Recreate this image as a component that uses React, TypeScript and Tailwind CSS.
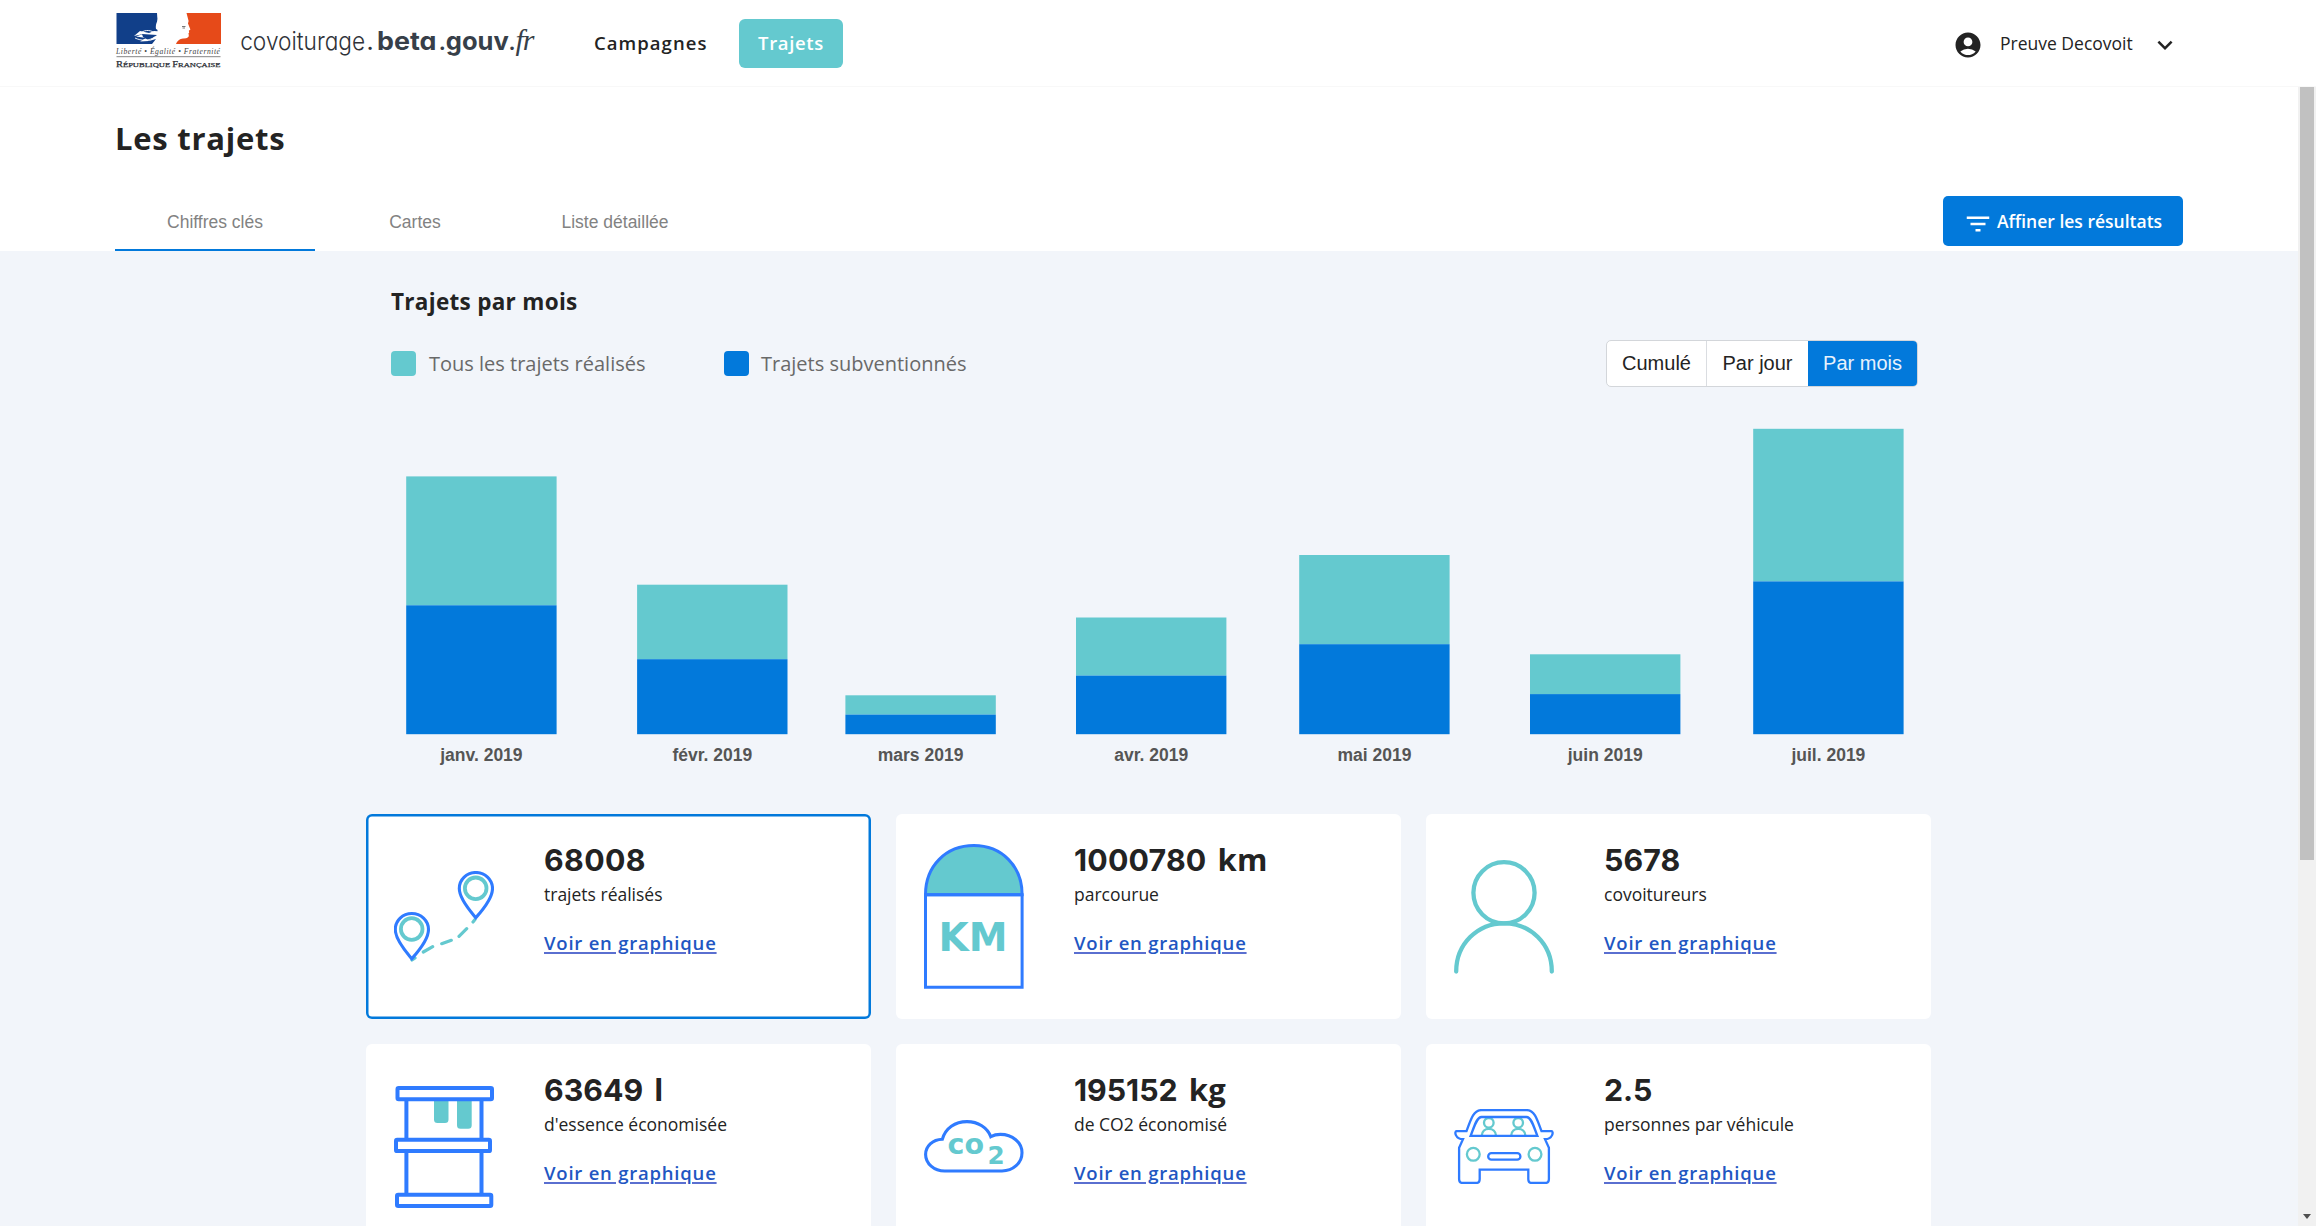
import type { ReactNode } from "react";
import { MdAccountCircle, MdFilterList, MdKeyboardArrowDown } from "react-icons/md";

const TEAL = "#64c9cf";
const LINE = "#2f7bff";

function Logo() {
  return (
    <svg width="430" height="60" viewBox="0 0 430 60" className="block shrink-0">
      <rect x="1.5" y="3" width="41" height="31" fill="#113f89" />
      <path
        d="M42 3H71.5C72.5 6 72.7 8 73.4 11L72.8 13.5L75.2 19.5L73.5 20.5L74 22.5L73 23.4L73.6 25.2C73.6 27.5 71 28.4 67 28C64 29.5 62 32 61 34H37L41 29L34 31L25 31.5L31 28L21 26.5L28 24L19 26L25 21L34 23L39 21L46 21.5L41 19C40 13 44 10 42.5 7Z"
        fill="#fff"
      />
      <path d="M71.5 3H106V34H61C62 31 65 28.6 68 28.4C72 28.6 74.2 27.4 73.8 25L73.4 23.4L74.2 22.4L73.8 20.7L75.4 19.6L73 13.6L73.6 11Z" fill="#e64a19" />
      <path d="M27 24L42 25L34 30.5L28 27Z" fill="#113f89" />
      <path d="M24 24c5-4 10-5 16-1M20 28c6 3 14 3 20-1" fill="none" stroke="#fff" strokeWidth="0.9" />
      <path d="M67 16.5h3.5M67.5 18h2.5" stroke="#555" strokeWidth="0.8" />
      <text x="1" y="43.5" fontSize="7.6" fontStyle="italic" fill="#444" textLength="104" fontFamily="'Liberation Serif', serif">
        Liberté • Égalité • Fraternité
      </text>
      <path d="M1.5 46.7H105.5" stroke="#777" strokeWidth="0.9" />
      <text x="1" y="56.6" fill="#2c2f36" stroke="#2c2f36" strokeWidth="0.25" fontSize="7" textLength="104.5" lengthAdjust="spacingAndGlyphs" fontFamily="'Liberation Serif', serif">
        <tspan fontSize="8.6">R</tspan>ÉPUBLIQUE <tspan fontSize="8.6">F</tspan>RANÇAISE
      </text>
      <g fontFamily="Inter, sans-serif">
        <text x="125.2" y="39.6" fontSize="25.5" fontWeight="300" fill="#2f3238" textLength="125" lengthAdjust="spacingAndGlyphs" style={{ fontFeatureSettings: "'cv11'" }}>
          covoiturage
        </text>
        <text x="251.5" y="39.6" fontSize="25" fontWeight="400" fill="#2f3238">.</text>
        <text x="262" y="39.6" fontSize="25" fontWeight="700" fill="#373f49" textLength="59.5" lengthAdjust="spacingAndGlyphs" style={{ fontFeatureSettings: "'cv11'" }}>
          beta
        </text>
        <text x="323.5" y="39.6" fontSize="25" fontWeight="500" fill="#373f49">.</text>
        <text x="330.8" y="39.6" fontSize="25" fontWeight="700" fill="#373f49" textLength="63" lengthAdjust="spacingAndGlyphs">
          gouv
        </text>
      </g>
      <text x="394" y="40" fontSize="30" fontStyle="italic" fill="#373f49" textLength="25.5" fontFamily="'Liberation Serif', serif">
        .fr
      </text>
    </svg>
  );
}

function RouteIcon() {
  const pin = "M81.8 46.7C78 42 65.3 28.5 65.3 17.5C65.3 8.5 72.8 1.5 81.8 1.5S98.5 8.5 98.5 17.5C98.5 28.5 86 42 81.8 46.7Z";
  return (
    <svg width="100" height="91" viewBox="0 0 100 91" fill="none">
      <g stroke={TEAL} strokeWidth="3.2" strokeLinecap="round">
        <path d="M81 48.5L79 51M72.7 57.7L65 65.3M57.3 69.3L47.7 72.7M38.7 75.7L29.3 81M21 87L18 89" />
      </g>
      <path d={pin} stroke={LINE} strokeWidth="3.1" />
      <circle cx="81.7" cy="17.3" r="10.8" stroke={TEAL} strokeWidth="3.8" />
      <g transform="translate(-64 41)">
        <path d={pin} stroke={LINE} strokeWidth="3.1" />
        <circle cx="81.7" cy="17" r="10.8" stroke={TEAL} strokeWidth="3.8" />
      </g>
    </svg>
  );
}

function MilestoneIcon() {
  return (
    <svg width="100" height="145" viewBox="0 0 100 145">
      <path d="M1.5 50.7C1.5 22 22 1.6 49.8 1.6S98.1 22 98.1 50.7Z" fill={TEAL} stroke={LINE} strokeWidth="3" />
      <path d="M1.5 50.7H98.1V143.2H1.5Z" fill="none" stroke={LINE} strokeWidth="3" />
      <text x="14.6" y="107" fontSize="39" fontWeight="700" fill={TEAL} textLength="69" fontFamily="'DejaVu Sans', sans-serif">
        KM
      </text>
    </svg>
  );
}

function PersonIcon() {
  return (
    <svg width="100" height="114" viewBox="0 0 100 114" fill="none" stroke={TEAL} strokeWidth="4.3" strokeLinecap="round">
      <circle cx="50" cy="32.8" r="30.6" />
      <path d="M2.2 111.5C2.2 84 23.5 63.3 50 63.3S97.8 84 97.8 111.5" />
    </svg>
  );
}

function BarrelIcon() {
  return (
    <svg width="100" height="122" viewBox="0 0 100 122" fill="none">
      <path d="M40 14H54.5V33.5Q54.5 37 51 37H43.5Q40 37 40 33.5ZM63 14H77.7V39.2Q77.7 42.7 74.2 42.7H66.5Q63 42.7 63 39.2Z" fill={TEAL} />
      <g stroke={LINE} strokeWidth="4">
        <path d="M12.4 13V54M87.5 13V54M12.4 65V109M87.5 65V109" />
        <rect x="3.5" y="2" width="94.5" height="11.3" rx="1.2" />
        <rect x="2" y="53.8" width="94" height="11.3" rx="1.2" />
        <rect x="3" y="108.8" width="94.3" height="11.2" rx="1.2" />
      </g>
    </svg>
  );
}

function CloudIcon() {
  return (
    <svg width="100" height="53" viewBox="0 0 100 53">
      <path
        d="M20.7 51C10 51 1.6 43.5 1.6 34.5C1.6 26.5 8.5 19.5 18.3 19.3C21.5 8 31 1.6 43 1.6C54 1.6 63.5 7.5 66.8 16.7C70 15 74 14.4 76.4 14.4C88.5 14.4 98 22.5 98 32.7C98 43 89 51 78 51Z"
        fill="none"
        stroke={LINE}
        strokeWidth="3.1"
      />
      <g fontFamily="'DejaVu Sans', sans-serif" fontWeight="700" fill={TEAL}>
        <text x="23.6" y="34.4" fontSize="28.5">co</text>
        <text x="63.6" y="43.7" fontSize="24.7">2</text>
      </g>
    </svg>
  );
}

function CarIcon() {
  return (
    <svg width="100" height="75" viewBox="0 0 100 75" fill="none" strokeWidth="2.3">
      <g stroke={TEAL}>
        <circle cx="34.8" cy="13.8" r="4.8" />
        <circle cx="64.2" cy="13.8" r="4.8" />
        <path d="M27.8 26.5C28 22.3 31 19.8 34.8 19.8S41.8 22.3 42 26.5M57.2 26.5C57.4 22.3 60.4 19.8 64.2 19.8S71.2 22.3 71.4 26.5" />
        <circle cx="19.3" cy="45.3" r="6.4" />
        <circle cx="81" cy="45.3" r="6.4" />
      </g>
      <g stroke={LINE}>
        <path d="M27.5 1.1H72.7C80 1.1 82.5 8 87.5 22.2H97.5C99.8 22.2 99 30 91 30.2L94.9 38.7V70C94.9 72.5 93.5 74 91 74H78C75.5 74 74.3 72.5 74.3 70V60.7H25.7V70C25.7 72.5 24.5 74 22 74H9C6.5 74 5.1 72.5 5.1 70V38.7L9 30.2C1 30 0.2 22.2 2.5 22.2H12.5C17.5 8 20 1.1 27.5 1.1Z" />
        <path d="M16.6 26.9C20 18.5 22.5 8 27.5 8H72.5C77.5 8 80 18.5 83.4 26.9Z" />
        <rect x="34.2" y="44.2" width="32.2" height="6.5" rx="3.2" />
      </g>
    </svg>
  );
}

const months = [
  { label: "janv. 2019", x: 406.2, top: 476.4, mid: 605.3 },
  { label: "févr. 2019", x: 637.1, top: 584.7, mid: 659.2 },
  { label: "mars 2019", x: 845.4, top: 695.3, mid: 714.6 },
  { label: "avr. 2019", x: 1076, top: 617.5, mid: 675.6 },
  { label: "mai 2019", x: 1299.2, top: 555, mid: 644.2 },
  { label: "juin 2019", x: 1530, top: 654.3, mid: 694.1 },
  { label: "juil. 2019", x: 1753.2, top: 428.8, mid: 581.4 },
];

function MonthlyChart() {
  const base = 734.2;
  return (
    <svg width="1565" height="385" viewBox="366 407 1565 385" className="block">
      {months.map((m) => (
        <g key={m.label}>
          <rect x={m.x} y={m.top} width="150.4" height={m.mid - m.top} fill={TEAL} />
          <rect x={m.x} y={m.mid} width="150.4" height={base - m.mid} fill="#0279db" />
          <text x={m.x + 75.2} y="761.4" textAnchor="middle" fontSize="17.5" fontWeight="700" fill="#555" fontFamily="'Liberation Sans', sans-serif">
            {m.label}
          </text>
        </g>
      ))}
    </svg>
  );
}

type CardProps = { value: string; unit?: string; label: string; icon: ReactNode; active?: boolean; tracking: string };

function StatCard({ value, unit, label, icon, active, tracking }: CardProps) {
  return (
    <article
      className={
        active
          ? "flex h-[205px] rounded-md bg-white shadow-[inset_0_0_0_2.5px_#0279db]"
          : "flex h-[205px] rounded-md bg-white"
      }
    >
      <div className="ml-7 flex w-[150px] shrink-0 items-center">{icon}</div>
      <div className="pt-[26px]">
        <p className="h-10 text-[30.3px] leading-10 font-bold whitespace-nowrap text-[#232323]">
          <span className={tracking}>{value}</span>
          {unit && <span className="ml-[11px] font-['Open_Sans',sans-serif] text-[31px] leading-none tracking-[0.3px]">{unit}</span>}
        </p>
        <p className="mt-0.5 h-6 font-['Open_Sans',sans-serif] text-[17.5px] leading-6 whitespace-nowrap text-[#232323]">{label}</p>
        <a
          href="#"
          className="mt-[25px] block h-6 font-['Open_Sans',sans-serif] text-[18.5px] leading-6 font-semibold tracking-[0.78px] whitespace-nowrap text-[#2156c2] underline decoration-[#5a6fd0] decoration-[1.5px] underline-offset-[2px]"
        >
          Voir en graphique
        </a>
      </div>
    </article>
  );
}

function Scrollbar() {
  return (
    <div className="flex w-[18px] shrink-0 flex-col items-center justify-between bg-[#f1f1f1]">
      <div className="h-[773px] w-[14px] bg-[#c1c1c1]" />
      <svg width="8" height="5" viewBox="0 0 8 5" className="mb-[7px]">
        <path d="M0 0H8L4 5Z" fill="#505050" />
      </svg>
    </div>
  );
}

export default function App() {
  return (
    <div className="flex h-[1226px] w-full flex-col overflow-hidden bg-white font-['Inter',sans-serif] text-[#232323]">
      <header className="flex h-[87px] shrink-0 items-start border-b border-[#f8f8f8] pr-[136px] pl-[115px]">
        <div className="mt-2.5 w-[479px]">
          <Logo />
        </div>
        <nav className="mt-[18.5px] flex items-center font-['Open_Sans',sans-serif] text-[18.5px] leading-[26px] font-semibold">
          <a href="#" className="w-[145px] pb-px tracking-[1.05px]">Campagnes</a>
          <a href="#" className="flex h-[49px] w-[104px] items-center justify-center rounded-md bg-[#64c9cf] pb-px tracking-[0.65px] text-white">
            Trajets
          </a>
        </nav>
        <div className="mt-[30px] ml-auto flex items-center">
          <MdAccountCircle className="size-[30px] text-[#232323]" />
          <span className="ml-[17px] h-[30px] w-[150px] font-['Open_Sans',sans-serif] text-[17.5px] leading-[26px]">Preuve Decovoit</span>
          <MdKeyboardArrowDown className="size-[30px]" />
        </div>
      </header>

      <div className="flex min-h-0 flex-1">
        <main className="flex w-[2298px] shrink-0 flex-col bg-[#f2f5fa]">
          <section className="flex h-[164px] shrink-0 flex-col bg-white pr-[115px] pl-[115px]">
            <h1 className="mt-[31px] h-10 font-['Open_Sans',sans-serif] text-[31px] leading-10 font-bold tracking-[0.75px]">Les trajets</h1>
            <div className="mt-auto flex items-end justify-between">
              <div className="flex font-['Liberation_Sans',sans-serif] text-[17.5px] text-[#828282]">
                <div className="flex h-[60px] w-[200px] items-center justify-center border-b-[2.5px] border-[#0279db] pt-[5px]">Chiffres clés</div>
                <div className="flex h-[60px] w-[200px] items-center justify-center border-b-[2.5px] border-transparent pt-[5px]">Cartes</div>
                <div className="flex h-[60px] w-[200px] items-center justify-center border-b-[2.5px] border-transparent pt-[5px]">Liste détaillée</div>
              </div>
              <button className="mb-[5px] flex h-[50px] w-[240px] items-center rounded-[5px] bg-[#0279db] pl-5 font-['Open_Sans',sans-serif] text-[17.5px] font-semibold whitespace-nowrap text-white">
                <MdFilterList className="mt-[5px] mr-[4px] size-[30px]" />
                Affiner les résultats
              </button>
            </div>
          </section>

          <section className="ml-[366px] w-[1565px]">
            <div className="h-[156px] pt-[36px] pr-[13px] pl-[25px]">
              <h2 className="h-[30px] font-['Open_Sans',sans-serif] text-[22.5px] leading-[30px] font-bold tracking-[0.3px]">Trajets par mois</h2>
              <div className="mt-[23px] flex items-center justify-between">
                <div className="flex h-[47px] items-center font-['Open_Sans',sans-serif] text-[20px] text-[#696969]">
                  <span className="mb-px size-[25px] rounded bg-[#64c9cf]" />
                  <span className="ml-[13px] w-[295px]">Tous les trajets réalisés</span>
                  <span className="mb-px size-[25px] rounded bg-[#0279db]" />
                  <span className="ml-3">Trajets subventionnés</span>
                </div>
                <div className="flex h-[47px] w-[312px] overflow-hidden rounded-[5px] border border-[#d3d6da] bg-white font-['Liberation_Sans',sans-serif] text-[20px]">
                  <div className="flex w-[100px] items-center justify-center border-r border-[#dadde1] pb-px">Cumulé</div>
                  <div className="flex w-[101px] items-center justify-center pb-px">Par jour</div>
                  <div className="flex flex-1 items-center justify-center bg-[#0279db] pb-px text-[#e8f2fc]">Par mois</div>
                </div>
              </div>
            </div>
            <MonthlyChart />
            <div className="mt-[22px] grid grid-cols-3 gap-[25px]">
              <StatCard active value="68008" label="trajets réalisés" icon={<RouteIcon />} tracking="tracking-[0.4px]" />
              <StatCard value="1000780" unit="km" label="parcourue" icon={<MilestoneIcon />} tracking="tracking-[0.2px]" />
              <StatCard value="5678" label="covoitureurs" icon={<PersonIcon />} tracking="tracking-[0.1px]" />
              <StatCard value="63649" unit="l" label="d'essence économisée" icon={<BarrelIcon />} tracking="tracking-[0px]" />
              <StatCard value="195152" unit="kg" label="de CO2 économisé" icon={<CloudIcon />} tracking="tracking-[0px]" />
              <StatCard value="2.5" label="personnes par véhicule" icon={<CarIcon />} tracking="tracking-[0px]" />
            </div>
          </section>
        </main>
        <Scrollbar />
      </div>
    </div>
  );
}
